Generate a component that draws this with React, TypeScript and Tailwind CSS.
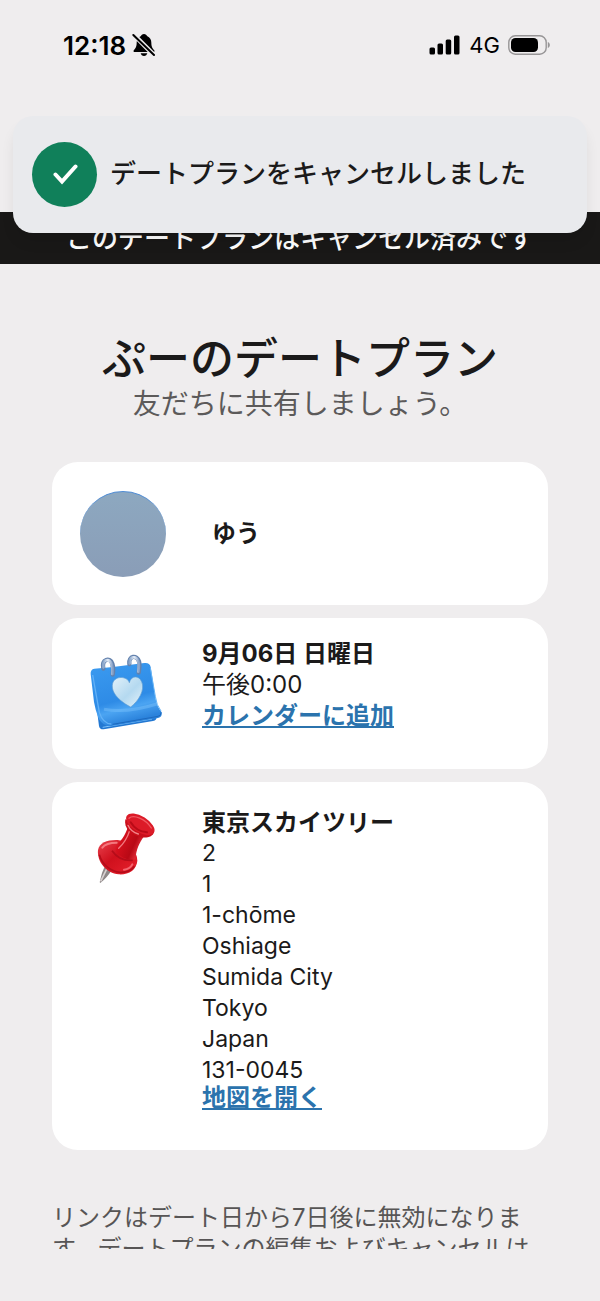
import type { ReactNode } from 'react'

const address = ['2', '1', '1-chōme', 'Oshiage', 'Sumida City', 'Tokyo', 'Japan', '131-0045']

const BellOffIcon = () => (
  <svg className="h-6 w-6" viewBox="0 0 72 72" aria-hidden="true">
    <path
      d="M36 3c5 0 8 3 9 6 9 4 13 11 13 20 0 13 4 17 9 23v5H5v-5c5-6 9-10 9-23 0-9 4-16 13-20 1-3 4-6 9-6z"
      fill="#000"
    />
    <path d="M26 61h20c-1 5-5 8-10 8s-9-3-10-8z" fill="#000" />
    <path d="M4 4l64 64" stroke="#efedee" strokeWidth="14" />
    <path d="M4 6l62 60" stroke="#000" strokeWidth="6" strokeLinecap="round" />
  </svg>
)

const SignalIcon = () => (
  <svg className="h-5 w-8" viewBox="0 0 32 20" aria-hidden="true">
    <rect x="0.5" y="12.5" width="5.5" height="7" rx="1.5" />
    <rect x="8.5" y="8.5" width="5.5" height="11" rx="1.5" />
    <rect x="16.7" y="4.5" width="5.5" height="15" rx="1.5" />
    <rect x="25" y="0.5" width="5.5" height="19" rx="1.5" />
  </svg>
)

const BatteryIcon = () => (
  <svg className="h-5 w-11" viewBox="0 0 44 20" aria-hidden="true">
    <rect x="0.8" y="0.8" width="37.4" height="18.4" rx="6.5" fill="none" stroke="#979596" strokeWidth="1.4" />
    <rect x="3" y="3" width="27" height="14" rx="4.5" />
    <path d="M39.8 7c2.7 1 2.7 5 0 6z" fill="#979596" />
  </svg>
)

const CalendarIcon = () => (
  <svg className="h-[100px] w-[100px] shrink-0" viewBox="0 0 300 300" aria-hidden="true">
    <defs>
      <linearGradient id="cal-page" x1="0" y1="0" x2="0.3" y2="1">
        <stop offset="0" stopColor="#3b9bf0" />
        <stop offset="0.65" stopColor="#2e8be6" />
        <stop offset="0.8" stopColor="#4ba4f2" />
        <stop offset="1" stopColor="#2b83dc" />
      </linearGradient>
      <linearGradient id="cal-heart" x1="0" y1="0" x2="1" y2="1">
        <stop offset="0" stopColor="#e2f1fa" />
        <stop offset="0.55" stopColor="#b4d9f0" />
        <stop offset="1" stopColor="#e6f3fa" />
      </linearGradient>
      <linearGradient id="cal-ring" x1="0" y1="0" x2="1" y2="0">
        <stop offset="0" stopColor="#8aa6cb" />
        <stop offset="0.5" stopColor="#e6eef8" />
        <stop offset="1" stopColor="#8aa3c8" />
      </linearGradient>
    </defs>
    <path d="M38 110l19 148q2 11 14 10l148-25q12-2 11-14l-20-90z" fill="#2378d2" />
    <path d="M68 262l148-25" stroke="#82c4fa" strokeWidth="3" />
    <path
      d="M32 102q-1-14 11-16l56-5 94-12q16-2 19 12l14 91q4 28 19 45 3 14-11 17l-140 24q-22 3-38-22-10-25-14-50z"
      fill="url(#cal-page)"
    />
    <path d="M38 105l20 112q11 34 36 35" fill="none" stroke="#62b1f7" strokeWidth="4" />
    <path d="M72 208q72 12 158-16" fill="none" stroke="#8accff" strokeWidth="9" opacity="0.35" />
    <path d="M98 253l136-24q10-2 9-12" fill="none" stroke="#1d69be" strokeWidth="3" />
    <path d="M211 84l15 85q3 27 17 44" fill="none" stroke="#67b5f7" strokeWidth="3" />
    <path
      d="M148 128c-5-19-43-23-50 2-8 30 28 58 54 71 23-17 44-51 33-76-8-20-32-19-37 3z"
      fill="url(#cal-heart)"
      stroke="#5d9cd2"
      strokeWidth="2"
    />
    <path d="M70 86c-6-30 20-35 27-15 4 12 3 22 1 33" fill="none" stroke="#6482ad" strokeWidth="13" strokeLinecap="round" />
    <path d="M70 82c-4-24 18-29 25-10 3 10 3 19 2 30" fill="none" stroke="url(#cal-ring)" strokeWidth="8" strokeLinecap="round" />
    <path d="M148 72c-3-26 23-28 29-8 3 11 1 22-1 34" fill="none" stroke="#6482ad" strokeWidth="13" strokeLinecap="round" />
    <path d="M149 70c-2-22 20-24 26-6 3 10 1 21 0 31" fill="none" stroke="url(#cal-ring)" strokeWidth="8" strokeLinecap="round" />
  </svg>
)

const PinIcon = () => (
  <svg className="h-[100px] w-[100px] shrink-0" viewBox="0 0 300 300" aria-hidden="true">
    <defs>
      <linearGradient id="pin-base" x1="0" y1="0" x2="1" y2="1">
        <stop offset="0" stopColor="#e9434e" />
        <stop offset="0.45" stopColor="#cf101d" />
        <stop offset="1" stopColor="#e8222e" />
      </linearGradient>
      <linearGradient id="pin-neck" x1="0" y1="0" x2="1" y2="0.5">
        <stop offset="0" stopColor="#e8434d" />
        <stop offset="0.35" stopColor="#d5101d" />
        <stop offset="0.75" stopColor="#b80915" />
        <stop offset="1" stopColor="#e7323e" />
      </linearGradient>
    </defs>
    <path d="M73 202l22 9q-15 24-34 38-3-2-1-7 5-24 13-40z" fill="#8e8787" />
    <path d="M80 207l-18 37" stroke="#d8d2d2" strokeWidth="5" />
    <path
      d="M54 150c4-23 29-31 59-30 31 4 58 31 59 62-2 28-27 43-56 41-37-3-66-39-62-73z"
      fill="url(#pin-base)"
    />
    <path d="M58 164c8 28 32 50 62 53 19 1 35-6 43-18" fill="none" stroke="#b50c19" strokeWidth="5" />
    <path d="M144 80l47 30c-14 20-22 38-25 68-25 7-57-12-63-37 20-17 32-33 41-61z" fill="url(#pin-neck)" />
    <path d="M67 143c10-14 31-15 43-15" fill="none" stroke="#f4787e" strokeWidth="6" strokeLinecap="round" />
    <path d="M149 92c-8 25-19 40-33 53" fill="none" stroke="#f27a80" strokeWidth="4" strokeLinecap="round" />
    <path d="M96 152c14 20 37 31 62 29" fill="none" stroke="#b50c19" strokeWidth="5" />
    <path d="M157 193c-5 10-14 15-25 16" fill="none" stroke="#f56670" strokeWidth="6" strokeLinecap="round" />
    <path d="M136 58c-5 27 16 45 43 53 21 5 40-1 43-15z" fill="#c90f1b" />
    <ellipse cx="181" cy="73" rx="48" ry="24" transform="rotate(32 181 73)" fill="#dc1b28" />
    <path d="M147 55c13-13 50 2 67 29" fill="none" stroke="#ef5a63" strokeWidth="4" strokeLinecap="round" />
    <path d="M152 67c12 20 31 29 49 30" fill="none" stroke="#b90b17" strokeWidth="6" strokeLinecap="round" />
    <path d="M144 76c6 14 17 22 31 26" fill="none" stroke="#f38388" strokeWidth="4" strokeLinecap="round" />
  </svg>
)

const Card = ({ className, children }: { className: string; children: ReactNode }) => (
  <section className={`flex rounded-[26px] bg-white px-7 ${className}`}>{children}</section>
)

const CardLink = ({ href, children }: { href: string; children: ReactNode }) => (
  <a href={href} className="block w-fit font-bold text-[#2b73ad] underline decoration-2 underline-offset-2">
    {children}
  </a>
)

const StatusBar = () => (
  <div className="flex h-[90px] items-center justify-between pr-12 pl-[63px] text-black">
    <div className="flex items-center gap-1.5">
      <span className="text-[26px] font-semibold">12:18</span>
      <BellOffIcon />
    </div>
    <div className="flex items-center gap-2">
      <SignalIcon />
      <span className="text-[22px]">4G</span>
      <BatteryIcon />
    </div>
  </div>
)

const Toast = () => (
  <div
    role="status"
    className="absolute inset-x-[13px] top-[116px] flex h-[117px] items-center gap-[13px] rounded-[20px] bg-[#e9eaed] px-[19px] shadow-[0_10px_16px_-4px_rgba(0,0,0,0.12)]"
  >
    <span className="flex h-[65px] w-[65px] shrink-0 items-center justify-center rounded-full bg-[#10805a]">
      <svg className="h-[26px] w-[26px]" viewBox="0 0 26 26" fill="none" aria-hidden="true">
        <path d="M3.5 12.5l6.5 7L23.5 4.5" stroke="#fff" strokeWidth="4" strokeLinecap="round" />
      </svg>
    </span>
    <p className="pb-0.5 text-[26px] leading-8 font-medium whitespace-nowrap">デートプランをキャンセルしました</p>
  </div>
)

const App = () => {
  return (
    <div className="relative min-h-screen bg-[#efedee] font-['Inter','Noto_Sans_CJK_JP',sans-serif] text-[#1b1a1a]">
      <StatusBar />
      <div className="mt-[122px] flex h-[52px] items-center justify-center bg-[#191817] text-[26px] font-medium whitespace-nowrap text-white">
        このデートプランはキャンセル済みです
      </div>
      <Toast />

      <main className="px-[52px] pt-[68px]">
        <header className="text-center whitespace-nowrap">
          <h1 className="text-[44px] leading-[54px] font-medium">ぷーのデートプラン</h1>
          <p className="text-[28px] leading-9 text-[#5c5a5a]">友だちに共有しましょう。</p>
        </header>

        <div className="mt-10 flex flex-col gap-[13px] text-2xl leading-[31px]">
          <Card className="h-[143px] items-center gap-[46px]">
            <div className="h-[86px] w-[86px] rounded-full border-t border-[#4e8bd4] bg-linear-to-b from-[#8da8c0] to-[#8a9db7]" />
            <h2 className="font-bold">ゆう</h2>
          </Card>

          <Card className="h-[151px] items-center gap-[22px] pb-2">
            <CalendarIcon />
            <div className="pb-2.5">
              <h2 className="font-bold">9月06日 日曜日</h2>
              <p>午後0:00</p>
              <CardLink href="#calendar">カレンダーに追加</CardLink>
            </div>
          </Card>

          <Card className="gap-[22px] pt-[18px] pb-10">
            <PinIcon />
            <div className="pt-[7px]">
              <h2 className="font-bold">東京スカイツリー</h2>
              <address className="text-[23px] not-italic">
                {address.map(line => (
                  <div key={line}>{line}</div>
                ))}
              </address>
              <div className="leading-6">
                <CardLink href="#map">地図を開く</CardLink>
              </div>
            </div>
          </Card>
        </div>

        <div className="mt-[52px] h-[47px] overflow-hidden">
          <p className="text-2xl leading-[31px] whitespace-nowrap text-[#575555]">
            リンクはデート日から7日後に無効になりま
            <br />
            す。デートプランの編集およびキャンセルは
          </p>
        </div>
      </main>
    </div>
  )
}

export default App
